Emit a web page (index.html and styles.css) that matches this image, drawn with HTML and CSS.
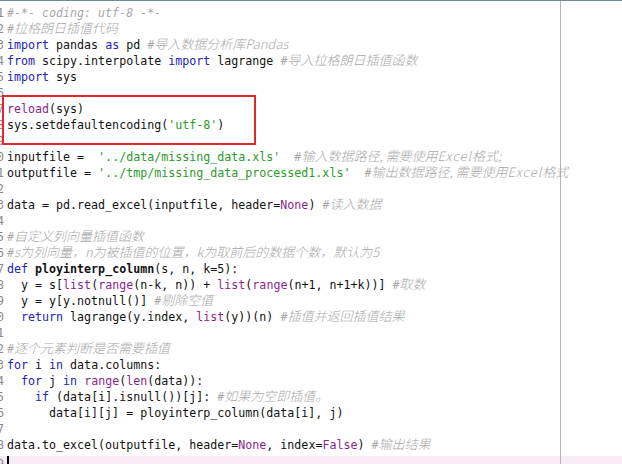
FILE: index.html
```html
<!DOCTYPE html>
<html lang="zh-CN">
<head>
  <meta charset="UTF-8" />
  <title>lagrange.py</title>
  <link rel="stylesheet" href="styles.css">
</head>
<body>
  <div class="editor">
    <div class="ln"><span class="no">1</span><span class="code"><span class="cm">#-*- coding: utf-8 -*-</span></span></div>
    <div class="ln"><span class="no">2</span><span class="code"><span class="cm">#</span><span class="cj">拉格朗日插值代码</span></span></div>
    <div class="ln"><span class="no">3</span><span class="code"><span class="kw">import</span> pandas <span class="kw">as</span> pd <span class="cm">#</span><span class="cj">导入数据分析库Pandas</span></span></div>
    <div class="ln"><span class="no">4</span><span class="code"><span class="kw">from</span> scipy.interpolate <span class="kw">import</span> lagrange <span class="cm">#</span><span class="cj">导入拉格朗日插值函数</span></span></div>
    <div class="ln"><span class="no">5</span><span class="code"><span class="kw">import</span> sys</span></div>
    <div class="ln"><span class="no">6</span><span class="code"></span></div>
    <div class="marked">
      <div class="ln"><span class="no">7</span><span class="code"><span class="bi">reload</span>(sys)</span></div>
      <div class="ln"><span class="no">8</span><span class="code">sys.setdefaultencoding(<span class="str">'utf-8'</span>)</span></div>
    </div>
    <div class="ln"><span class="no">9</span><span class="code"></span></div>
    <div class="ln"><span class="no">10</span><span class="code">inputfile =  <span class="str">'../data/missing_data.xls'</span>  <span class="cm">#</span><span class="cj">输入数据路径, 需要使用<span class="wide">Excel</span>格式;</span></span></div>
    <div class="ln"><span class="no">11</span><span class="code">outputfile = <span class="str">'../tmp/missing_data_processed1.xls'</span>  <span class="cm">#</span><span class="cj">输出数据路径, 需要使用<span class="wide">Excel</span>格式</span></span></div>
    <div class="ln"><span class="no">12</span><span class="code"></span></div>
    <div class="ln"><span class="no">13</span><span class="code">data = pd.read_excel(inputfile, header=<span class="bi">None</span>) <span class="cm">#</span><span class="cj">读入数据</span></span></div>
    <div class="ln"><span class="no">14</span><span class="code"></span></div>
    <div class="ln"><span class="no">15</span><span class="code"><span class="cm">#</span><span class="cj">自定义列向量插值函数</span></span></div>
    <div class="ln"><span class="no">16</span><span class="code"><span class="cm">#</span><span class="cj">s为列向量，n为被插值的位置，k为取前后的数据个数，默认为5</span></span></div>
    <div class="ln"><span class="no">17</span><span class="code"><span class="kw">def</span> <span class="fn">ployinterp_column</span>(s, n, k=5):</span></div>
    <div class="ln"><span class="no">18</span><span class="code">  y = s[<span class="bi">list</span>(<span class="bi">range</span>(n-k, n)) + <span class="bi">list</span>(<span class="bi">range</span>(n+1, n+1+k))] <span class="cm">#</span><span class="cj">取数</span></span></div>
    <div class="ln"><span class="no">19</span><span class="code">  y = y[y.notnull()] <span class="cm">#</span><span class="cj">剔除空值</span></span></div>
    <div class="ln"><span class="no">20</span><span class="code">  <span class="kw">return</span> lagrange(y.index, <span class="bi">list</span>(y))(n) <span class="cm">#</span><span class="cj">插值并返回插值结果</span></span></div>
    <div class="ln"><span class="no">21</span><span class="code"></span></div>
    <div class="ln"><span class="no">22</span><span class="code"><span class="cm">#</span><span class="cj">逐个元素判断是否需要插值</span></span></div>
    <div class="ln"><span class="no">23</span><span class="code"><span class="kw">for</span> i <span class="kw">in</span> data.columns:</span></div>
    <div class="ln"><span class="no">24</span><span class="code">  <span class="kw">for</span> j <span class="kw">in</span> <span class="bi">range</span>(<span class="bi">len</span>(data)):</span></div>
    <div class="ln"><span class="no">25</span><span class="code">    <span class="kw">if</span> (data[i].isnull())[j]: <span class="cm">#</span><span class="cj">如果为空即插值。</span></span></div>
    <div class="ln"><span class="no">26</span><span class="code">      data[i][j] = ployinterp_column(data[i], j)</span></div>
    <div class="ln"><span class="no">27</span><span class="code"></span></div>
    <div class="ln"><span class="no">28</span><span class="code">data.to_excel(outputfile, header=<span class="bi">None</span>, index=<span class="bi">False</span>) <span class="cm">#</span><span class="cj">输出结果</span></span></div>
    <div class="ln current"><span class="no">29</span><span class="code"><span class="caret"></span></span></div>
  </div>
</body>
</html>
```

FILE: styles.css
```css
* {
  box-sizing: border-box;
}

body {
  margin: 0;
  height: 464px;
  overflow: hidden;
  background: #fff;
}

/* editor pane, with the print margin drawn at 560px */
.editor {
  height: 464px;
  border-top: 1px solid #6f8ba3;
  padding-top: 4px;
  font-family: "DejaVu Sans Mono", monospace;
  font-size: 11.65px;
  color: #111;
  background: linear-gradient(to right, transparent 560px, #b4b4b4 560px, #b4b4b4 561px, transparent 561px);
}

.ln {
  display: flex;
  height: 16px;
  line-height: 16px;
  white-space: pre;
}

.no {
  width: 4px;
  flex: none;
  display: flex;
  justify-content: flex-end;
  overflow: hidden;
  color: #8a8a8a;
  margin-right: 3px;
}

.code {
  display: block;
}

.kw {
  color: #2222b8;
}

.bi {
  color: #8a1f8f;
}

.str {
  color: #2a9a2a;
}

.fn {
  font-weight: bold;
}

.cm {
  color: #a8a8a8;
  font-style: italic;
}

.cj {
  color: #a8a8a8;
  font-style: italic;
  font-family: "Noto Sans CJK SC", sans-serif;
  font-size: 13px;
  font-weight: 300;
  line-height: 1;
}

.wide {
  letter-spacing: 1px;
}

/* red annotation box round the reload lines */
.marked {
  position: relative;
}

.marked::after {
  content: "";
  position: absolute;
  left: 2px;
  top: -6px;
  width: 250px;
  height: 46px;
  border: 2.5px solid #e2282c;
}

.current {
  height: 20px;
  margin-top: 3px;
  background: linear-gradient(to right, transparent 560px, #b4b4b4 560px, #b4b4b4 561px, transparent 561px), #f6ebf6;
}

.caret {
  display: block;
  width: 2px;
  height: 16px;
  background: #000;
}
```
